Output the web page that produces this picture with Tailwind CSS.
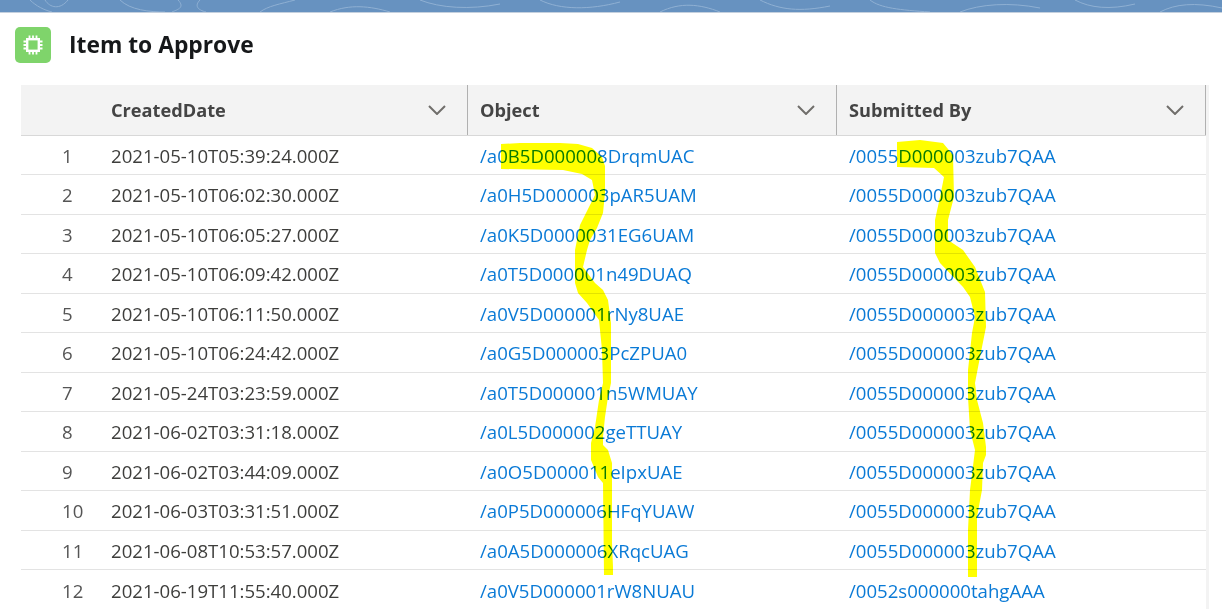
<!DOCTYPE html>
<html lang="en">
<head>
    <meta charset="UTF-8">
    <title>Item to Approve</title>
    <script src="https://cdn.jsdelivr.net/npm/@tailwindcss/browser@4"></script>
</head>
<body class="bg-white font-['Open_Sans',sans-serif] overflow-hidden">
<div class="relative w-[1222px] h-[609px] overflow-hidden">
    <!-- Banner strip -->
    <div class="h-[13px] bg-[#6792c0] border-b border-[#c4d0de] overflow-hidden">
        <svg width="1222" height="13" fill="none" stroke="#8fb0d3" stroke-width="1">
            <path d="M30 0 C36 6 44 10 52 12 M45 0 C50 8 60 10 68 0 M120 0 C130 10 150 12 165 12 M178 0 C186 8 176 10 172 12 M200 0 C194 6 198 10 206 12 M260 12 C268 6 280 4 295 0 M330 12 C350 4 370 6 390 12 M420 0 C440 8 470 10 500 4 M540 0 C560 10 590 10 620 2 M660 12 C680 2 700 4 720 12 M760 0 C780 10 800 12 830 6 M870 0 C880 8 900 10 930 12 M960 12 C980 4 1010 2 1040 8 M1075 0 C1090 8 1110 10 1135 4 M1160 12 C1175 4 1195 2 1222 8"/>
        </svg>
    </div>

    <!-- Title -->
    <div class="flex items-center h-[64px] pl-[15px]">
        <div class="flex items-center justify-center w-9 h-9 rounded-[5px] bg-[#7fd46b]">
            <svg width="22" height="22" viewBox="0 0 22 22" fill="none">
                <rect x="5.2" y="5.2" width="11.6" height="11.6" stroke="#fff" stroke-width="2.4"/>
                <path d="M7.5 1.5v3M11 1.5v3M14.5 1.5v3M7.5 17.500v3M11 17.500v3M14.500 17.500v3M1.500 7.500h3M1.500 11h3M1.500 14.500h3M17.500 7.500h3M17.500 11h3M17.500 14.500h3" stroke="#fff" stroke-width="1.8"/>
            </svg>
        </div>
        <h1 class="ml-[18px] text-[22.8px] font-bold text-[#16181a]">Item to Approve</h1>
    </div>

    <!-- Data table -->
    <div class="flex mt-2 ml-[21px]">
        <div class="w-[1185px] text-[18.6px] text-[#3e3e3c]">
            <div class="flex h-[50.5px] bg-[#f3f3f3] border-b border-[#d8d8d8] text-[18.2px] font-bold text-[#444]">
                <div class="flex items-center w-[447px] pl-[90px] pr-[21px] pt-px border-r border-[#b0b0b0]">
                    <span class="flex-1">CreatedDate</span>
                    <svg width="18" height="10" viewBox="0 0 18 10" fill="none" stroke="#706e6b" stroke-width="2"><path d="M1 1l8 8 8-8"/></svg>
                </div>
                <div class="flex items-center w-[369px] pl-3 pr-[21px] pt-px border-r border-[#b0b0b0]">
                    <span class="flex-1">Object</span>
                    <svg width="18" height="10" viewBox="0 0 18 10" fill="none" stroke="#706e6b" stroke-width="2"><path d="M1 1l8 8 8-8"/></svg>
                </div>
                <div class="flex items-center w-[369px] pl-3 pr-[21px] pt-px border-r border-[#b0b0b0]">
                    <span class="flex-1">Submitted By</span>
                    <svg width="18" height="10" viewBox="0 0 18 10" fill="none" stroke="#706e6b" stroke-width="2"><path d="M1 1l8 8 8-8"/></svg>
                </div>
            </div>

            <div class="flex h-[39.5px] pt-0.5 items-center border-b border-[#e3e3e3]"><span class="w-[90px] pl-[41px] text-[#555]">1</span><span class="w-[357px]">2021-05-10T05:39:24.000Z</span><a class="w-[369px] pl-3 text-[#0a7ad6]">/a0B5D000008DrqmUAC</a><a class="pl-3 text-[#0a7ad6]">/0055D000003zub7QAA</a></div>
            <div class="flex h-[39.5px] pt-0.5 items-center border-b border-[#e3e3e3]"><span class="w-[90px] pl-[41px] text-[#555]">2</span><span class="w-[357px]">2021-05-10T06:02:30.000Z</span><a class="w-[369px] pl-3 text-[#0a7ad6]">/a0H5D000003pAR5UAM</a><a class="pl-3 text-[#0a7ad6]">/0055D000003zub7QAA</a></div>
            <div class="flex h-[39.5px] pt-0.5 items-center border-b border-[#e3e3e3]"><span class="w-[90px] pl-[41px] text-[#555]">3</span><span class="w-[357px]">2021-05-10T06:05:27.000Z</span><a class="w-[369px] pl-3 text-[#0a7ad6]">/a0K5D0000031EG6UAM</a><a class="pl-3 text-[#0a7ad6]">/0055D000003zub7QAA</a></div>
            <div class="flex h-[39.5px] pt-0.5 items-center border-b border-[#e3e3e3]"><span class="w-[90px] pl-[41px] text-[#555]">4</span><span class="w-[357px]">2021-05-10T06:09:42.000Z</span><a class="w-[369px] pl-3 text-[#0a7ad6]">/a0T5D000001n49DUAQ</a><a class="pl-3 text-[#0a7ad6]">/0055D000003zub7QAA</a></div>
            <div class="flex h-[39.5px] pt-0.5 items-center border-b border-[#e3e3e3]"><span class="w-[90px] pl-[41px] text-[#555]">5</span><span class="w-[357px]">2021-05-10T06:11:50.000Z</span><a class="w-[369px] pl-3 text-[#0a7ad6]">/a0V5D000001rNy8UAE</a><a class="pl-3 text-[#0a7ad6]">/0055D000003zub7QAA</a></div>
            <div class="flex h-[39.5px] pt-0.5 items-center border-b border-[#e3e3e3]"><span class="w-[90px] pl-[41px] text-[#555]">6</span><span class="w-[357px]">2021-05-10T06:24:42.000Z</span><a class="w-[369px] pl-3 text-[#0a7ad6]">/a0G5D000003PcZPUA0</a><a class="pl-3 text-[#0a7ad6]">/0055D000003zub7QAA</a></div>
            <div class="flex h-[39.5px] pt-0.5 items-center border-b border-[#e3e3e3]"><span class="w-[90px] pl-[41px] text-[#555]">7</span><span class="w-[357px]">2021-05-24T03:23:59.000Z</span><a class="w-[369px] pl-3 text-[#0a7ad6]">/a0T5D000001n5WMUAY</a><a class="pl-3 text-[#0a7ad6]">/0055D000003zub7QAA</a></div>
            <div class="flex h-[39.5px] pt-0.5 items-center border-b border-[#e3e3e3]"><span class="w-[90px] pl-[41px] text-[#555]">8</span><span class="w-[357px]">2021-06-02T03:31:18.000Z</span><a class="w-[369px] pl-3 text-[#0a7ad6]">/a0L5D000002geTTUAY</a><a class="pl-3 text-[#0a7ad6]">/0055D000003zub7QAA</a></div>
            <div class="flex h-[39.5px] pt-0.5 items-center border-b border-[#e3e3e3]"><span class="w-[90px] pl-[41px] text-[#555]">9</span><span class="w-[357px]">2021-06-02T03:44:09.000Z</span><a class="w-[369px] pl-3 text-[#0a7ad6]">/a0O5D000011eIpxUAE</a><a class="pl-3 text-[#0a7ad6]">/0055D000003zub7QAA</a></div>
            <div class="flex h-[39.5px] pt-0.5 items-center border-b border-[#e3e3e3]"><span class="w-[90px] pl-[41px] text-[#555]">10</span><span class="w-[357px]">2021-06-03T03:31:51.000Z</span><a class="w-[369px] pl-3 text-[#0a7ad6]">/a0P5D000006HFqYUAW</a><a class="pl-3 text-[#0a7ad6]">/0055D000003zub7QAA</a></div>
            <div class="flex h-[39.5px] pt-0.5 items-center border-b border-[#e3e3e3]"><span class="w-[90px] pl-[41px] text-[#555]">11</span><span class="w-[357px]">2021-06-08T10:53:57.000Z</span><a class="w-[369px] pl-3 text-[#0a7ad6]">/a0A5D000006XRqcUAG</a><a class="pl-3 text-[#0a7ad6]">/0055D000003zub7QAA</a></div>
            <div class="flex h-[39.5px] pt-0.5 items-center"><span class="w-[90px] pl-[41px] text-[#555]">12</span><span class="w-[357px]">2021-06-19T11:55:40.000Z</span><a class="w-[369px] pl-3 text-[#0a7ad6]">/a0V5D000001rW8NUAU</a><a class="pl-3 text-[#0a7ad6]">/0052s000000tahgAAA</a></div>
        </div>
        <div class="w-[3px] bg-[#f3f3f3]"></div>
    </div>

    <!-- Yellow marker strokes drawn over the table -->
    <svg class="absolute inset-0 mix-blend-multiply pointer-events-none" width="1222" height="609" fill="#ffff00">
        <polygon points="501,144 520,143 560,143 578,144 592,148 602,157 605,166 605,193 603,213 597,228 590,240 587,250 583,267 595,283 603,290 608,300 611,323 611,383 608,397 605,417 603,437 603,445 608,450 612,463 612,543 613,567 613,575 604,575 603,483 598,477 591,460 591,443 595,427 599,400 603,383 602,350 599,320 587,303 578,293 575,283 575,250 576,245 580,225 590,205 595,195 592,180 582,174 563,170 501,169"/>
        <polygon points="897,142 920,140 943,143 953,155 954,197 948,220 948,240 963,250 975,267 985,292 986,327 980,357 975,383 977,400 983,423 986,447 986,455 983,463 982,490 977,517 977,577 968,577 968,530 970,490 975,450 970,430 968,397 968,370 972,333 975,317 970,297 963,287 940,263 935,253 935,245 935,220 940,197 944,177 934,168 897,167"/>
    </svg>
</div>
</body>
</html>
